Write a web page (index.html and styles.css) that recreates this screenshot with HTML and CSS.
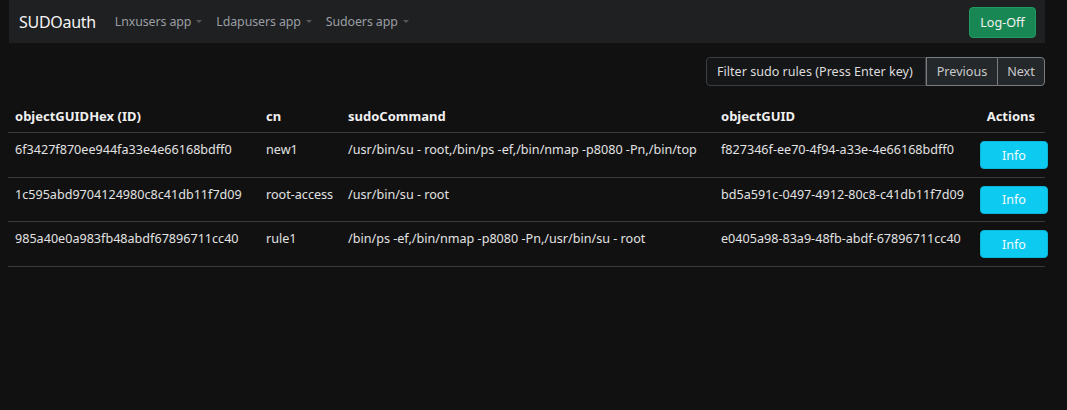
FILE: index.html
```html
<!DOCTYPE html>
<html>
<head>
<meta charset="utf-8">
<link rel="stylesheet" href="styles.css">
</head>
<body>
<div class="page">
  <nav class="navbar">
    <div class="brand">SUDOauth</div>
    <div class="nav-item">Lnxusers app <span class="caret"></span></div>
    <div class="nav-item">Ldapusers app <span class="caret"></span></div>
    <div class="nav-item">Sudoers app <span class="caret"></span></div>
    <div class="spacer"></div>
    <button class="btn-logoff">Log-Off</button>
  </nav>
  <div class="toolbar">
    <div class="filter">Filter sudo rules (Press Enter key)</div>
    <button class="pg pg-prev">Previous</button>
    <button class="pg pg-next">Next</button>
  </div>
  <table class="rules">
    <colgroup>
      <col class="c1"><col class="c2"><col class="c3"><col class="c4"><col class="c5">
    </colgroup>
    <thead>
      <tr><th>objectGUIDHex (ID)</th><th>cn</th><th>sudoCommand</th><th>objectGUID</th><th class="act">Actions</th></tr>
    </thead>
    <tbody>
      <tr><td>6f3427f870ee944fa33e4e66168bdff0</td><td>new1</td><td>/usr/bin/su - root,/bin/ps -ef,/bin/nmap -p8080 -Pn,/bin/top</td><td>f827346f-ee70-4f94-a33e-4e66168bdff0</td><td class="actc"><button class="btn-info">Info</button></td></tr>
      <tr><td>1c595abd9704124980c8c41db11f7d09</td><td>root-access</td><td>/usr/bin/su - root</td><td>bd5a591c-0497-4912-80c8-c41db11f7d09</td><td class="actc"><button class="btn-info">Info</button></td></tr>
      <tr><td>985a40e0a983fb48abdf67896711cc40</td><td>rule1</td><td>/bin/ps -ef,/bin/nmap -p8080 -Pn,/usr/bin/su - root</td><td>e0405a98-83a9-48fb-abdf-67896711cc40</td><td class="actc"><button class="btn-info">Info</button></td></tr>
    </tbody>
  </table>
</div>
</body>
</html>
```
FILE: styles.css
```css
html, body {
  margin: 0;
  padding: 0;
  background: #111111;
  color: #dee2e6;
  font-family: "Noto Sans", "DejaVu Sans", sans-serif;
}
.page {
  width: 1037px;
  margin-left: 8px;
}
.navbar {
  height: 43px;
  background: #1f2022;
  display: flex;
  align-items: center;
  padding: 0 9px 0 10px;
  box-sizing: border-box;
  margin-left: 1px;
}
.brand {
  font-size: 16px;
  color: #f4f4f4;
  margin-right: 19px;
  letter-spacing: -0.3px;
}
.nav-item {
  font-size: 12.4px;
  color: #9a9ea3;
  margin-right: 14px;
  display: flex;
  align-items: center;
  letter-spacing: -0.1px;
}
.caret {
  display: inline-block;
  margin-left: 5px;
  border-left: 3px solid transparent;
  border-right: 3px solid transparent;
  border-top: 3px solid #55585c;
}
.spacer { flex: 1; }
.btn-logoff {
  background: #198754;
  color: #f2f2f2;
  border: 1px solid #1f9a60;
  border-radius: 4px;
  font-family: inherit;
  font-size: 12.6px;
  height: 31px;
  width: 67px;
  padding: 0;
  margin-top: 1px;
}
.toolbar {
  display: flex;
  justify-content: flex-end;
  margin-top: 14px;
  height: 29px;
}
.filter {
  width: 220px;
  box-sizing: border-box;
  border: 1px solid #3b3e42;
  border-radius: 4px 0 0 4px;
  background: #151617;
  color: #dcdcdc;
  font-size: 12.6px;
  display: flex;
  align-items: center;
  padding-left: 10px;
}
.pg {
  background: #25282b;
  color: #c8cacc;
  border: 1px solid #7a7d80;
  font-family: inherit;
  font-size: 12.6px;
  padding: 0;
  height: 29px;
}
.pg-prev { width: 71px; border-right: none; }
.pg-next { width: 48px; border-radius: 0 4px 4px 0; border-left: 1px solid #7a7d80; }
.rules {
  width: 1037px;
  border-collapse: collapse;
  table-layout: fixed;
  margin-top: 14px;
  font-size: 12.6px;
}
.c1 { width: 251px; }
.c2 { width: 82px; }
.c3 { width: 373px; }
.c4 { width: 258px; }
.c5 { width: 73px; }
.rules th {
  text-align: left;
  font-weight: bold;
  font-size: 13px;
  color: #f0f0f0;
  padding: 0 7px;
  height: 32px;
  border-bottom: 1px solid #3a3b3d;
  vertical-align: middle;
}
.rules th.act { text-align: right; padding-right: 10px; }
.rules td {
  padding: 8px 7px 0;
  height: 35.5px;
  vertical-align: top;
  border-bottom: 1px solid #3a3b3d;
  white-space: nowrap;
  color: #e2e2e2;
}
.rules td.actc { padding: 8px 0 0 8px; overflow: visible; }
.btn-info {
  display: block;
  background: #0dcaf0;
  color: #f4fbfd;
  border: 1px solid #0bb5d8;
  border-radius: 4px;
  width: 68px;
  height: 28px;
  font-family: inherit;
  font-size: 12.6px;
  padding: 0;
}
```
